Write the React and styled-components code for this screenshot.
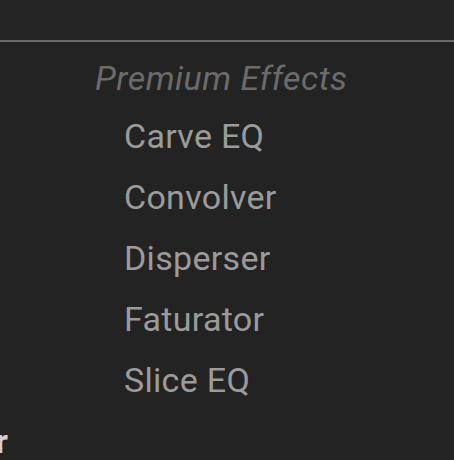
import styled, { createGlobalStyle } from 'styled-components'

const Global = createGlobalStyle`
  html, body { margin: 0; padding: 0; background: #232323; }
  body { font-family: Roboto, "Liberation Sans", sans-serif; overflow: hidden; }
`

const Page = styled.div`
  width: 454px;
  height: 460px;
  background: #232323;
  display: flex;
  flex-direction: column;
  overflow: hidden;
`

const TopBar = styled.div`
  height: 40px;
  background: #252525;
  border-bottom: 2px solid #6c6c6c;
  flex-shrink: 0;
`

const Section = styled.div`
  display: flex;
  flex-direction: column;
  padding: 12px 0 0 95px;
`

const SectionTitle = styled.div`
  font-size: 34px;
  font-style: italic;
  color: #6b6b6b;
  line-height: 48px;
  letter-spacing: 0.5px;
`

const List = styled.ul`
  list-style: none;
  margin: 0;
  padding: 4px 0 0 29px;
`

const Item = styled.li`
  font-size: 34px;
  color: #9b9b9b;
  line-height: 61px;
  height: 61px;
  letter-spacing: 0.3px;
`

const NextHeading = styled.div`
  margin: 10px 0 0 -120px;
  width: 128px;
  text-align: right;
  font-size: 34px;
  font-weight: 700;
  color: #d0d0d0;
  line-height: 40px;
`

const items = ['Carve EQ', 'Convolver', 'Disperser', 'Faturator', 'Slice EQ']

export default function App() {
  return (
    <Page>
      <Global />
      <TopBar />
      <Section>
        <SectionTitle>Premium Effects</SectionTitle>
        <List>
          {items.map(i => <Item key={i}>{i}</Item>)}
        </List>
      </Section>
      <NextHeading>Filter</NextHeading>
    </Page>
  )
}
